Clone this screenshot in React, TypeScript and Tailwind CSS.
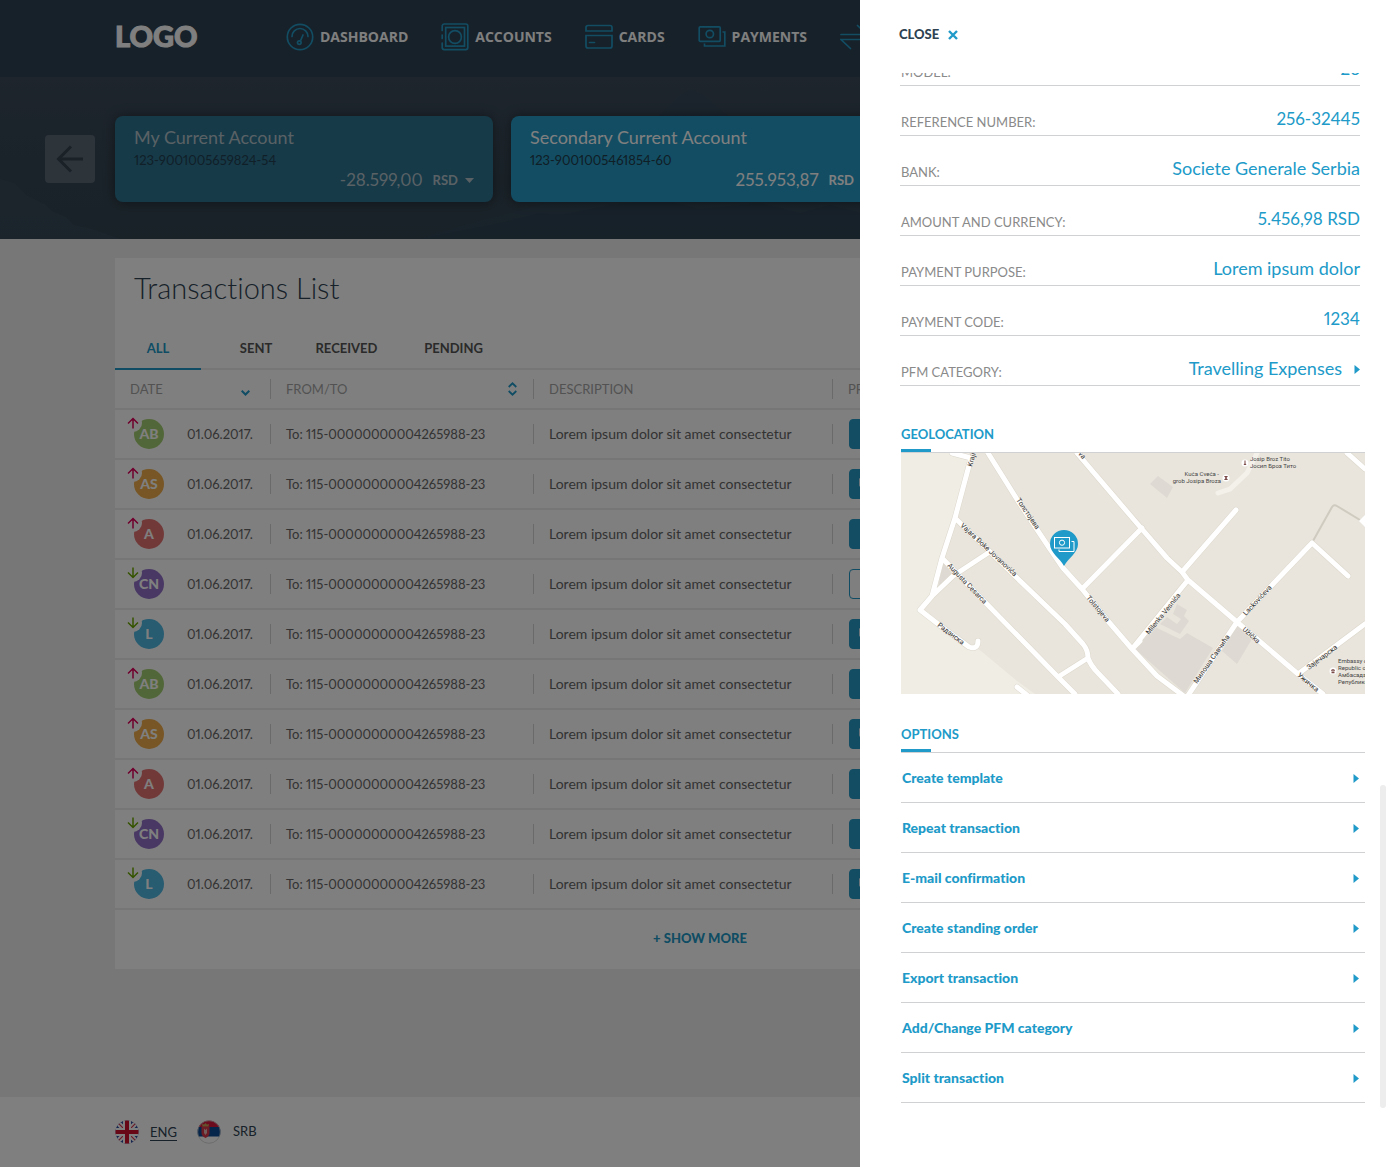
import React from 'react';

type IconProps = { className?: string };

function GaugeIcon() {
  return (
    <svg width="28" height="28" viewBox="0 0 28 28" fill="none" stroke="currentColor" strokeWidth="1.7" strokeLinecap="round" aria-hidden="true">
      <circle cx="14" cy="14" r="12.7" />
      <path d="M6 13.5a8 8 0 0 1 16 0M17 12l-2.6 6" />
      <circle cx="13.3" cy="19.6" r="1.8" />
    </svg>
  );
}

function SafeIcon() {
  return (
    <svg width="28" height="28" viewBox="0 0 28 28" fill="none" stroke="currentColor" strokeWidth="1.7" strokeLinecap="round" aria-hidden="true">
      <path d="M1.2 7.5V3a2 2 0 0 1 2-2h21.6a2 2 0 0 1 2 2v21.6a2 2 0 0 1-2 2H3.2a2 2 0 0 1-2-2V20M1.2 12v3.5" />
      <rect x="4.7" y="4.5" width="18.8" height="18.6" />
      <circle cx="14" cy="14" r="6.4" />
    </svg>
  );
}

function CardIcon() {
  return (
    <svg width="28" height="28" viewBox="0 0 28 28" fill="none" stroke="currentColor" strokeWidth="1.7" strokeLinecap="round" aria-hidden="true">
      <path d="M1 8V4.5a2 2 0 0 1 2-2h22a2 2 0 0 1 2 2V8zM1 12.5h26V23a2 2 0 0 1-2 2H3a2 2 0 0 1-2-2zM4.5 19.5h5" />
    </svg>
  );
}

function NotesIcon({ className }: IconProps) {
  return (
    <svg className={className} viewBox="0 0 28 28" fill="none" stroke="currentColor" strokeWidth="1.7" aria-hidden="true">
      <rect x="1.2" y="3.8" width="21" height="14.5" rx="1" />
      <circle cx="11.8" cy="11" r="3.7" />
      <path d="M24.5 9h2.3v14H6.5v-2.5" />
    </svg>
  );
}

function TransferIcon() {
  return (
    <svg width="28" height="28" viewBox="0 0 28 28" fill="none" stroke="currentColor" strokeWidth="1.7" strokeLinecap="round" aria-hidden="true">
      <path d="M1 11.5h26L17.5 2.5M27 16.5H1l9.5 9" />
    </svg>
  );
}

function Caret() {
  return (
    <svg width="6" height="10" viewBox="0 0 6 10" fill="currentColor" aria-hidden="true">
      <path d="M0.5 1 6 5.500 0.500 10z" />
    </svg>
  );
}

function UkFlag() {
  return (
    <svg width="24" height="24" viewBox="0 0 24 24" aria-hidden="true">
      <clipPath id="uk"><circle cx="12" cy="12" r="11.5" /></clipPath>
      <g clipPath="url(#uk)">
        <rect width="24" height="24" fill="#2b4a9c" />
        <path d="M0 0 24 24M24 0 0 24" stroke="#fff" strokeWidth="5" />
        <path d="M0 0 24 24M24 0 0 24" stroke="#d8344a" strokeWidth="1.2" />
        <path d="M12 0v24M0 12h24" stroke="#fff" strokeWidth="8" />
        <path d="M12 0v24M0 12h24" stroke="#d0102c" strokeWidth="4" />
      </g>
    </svg>
  );
}

function SerbiaFlag() {
  return (
    <svg width="24" height="24" viewBox="0 0 24 24" aria-hidden="true">
      <clipPath id="srb"><circle cx="12" cy="12" r="11.5" /></clipPath>
      <g clipPath="url(#srb)">
        <rect width="24" height="24" fill="#fff" />
        <rect width="24" height="7" fill="#d8163a" />
        <rect y="7" width="24" height="9.5" fill="#0c4a94" />
        <path d="M4.5 6.5h8v6.5q0 3-4 5-4-2-4-5z" fill="#d8394a" />
        <path d="M7 8.5 8.5 10 10 8.5 10 13l-1.5 2-1.5-2z" fill="#e6b9b9" />
        <path d="M5.5 6.5 5 4l2 .5L8.5 3l1.5 1.5L12 4l-.5 2.5z" fill="#c9a25a" />
      </g>
      <circle cx="12" cy="12" r="11.3" fill="none" stroke="#c9c9c9" strokeWidth="0.7" />
    </svg>
  );
}

function Mountains() {
  return (
    <svg className="absolute inset-0 h-full w-full" viewBox="0 0 1400 162" preserveAspectRatio="xMidYMax slice" aria-hidden="true">
      <path d="M0 102 14 106 26 118 34 122 46 128 52 134 66 140 74 148 92 152 120 162H0z" fill="#3f5061" opacity=".45" />
      <path d="M420 162 470 146 540 128 600 96 640 60 662 36 672 26 680 18 690 12 704 18 722 34 760 70 830 108 900 140 960 162z" fill="#33485a" opacity=".45" />
      <path d="M420 162 500 146 540 136 560 138 610 128 660 122 700 132 760 126 800 136 830 128 900 146 960 162z" fill="#283c4b" opacity=".3" />
    </svg>
  );
}

const roads =
  'M51 0 70 5 72 0M70 5 54 65 41 105 31 143 19 157 37 171 68 194Q77 197 77 188M54 65 114 123 164 171 182 191Q187 197 187 205 190 213 197 220L217 241M41 105 157 224 174 241M87 100 52 123 31 143M187 205 157 224M87 0 117 48 149 96 162 115 181 136 207 168 231 196 256 223 284 244M176 0 234 68 266 105 281 119 287 127 336 169 397 221 422 241M181 136 241 75M281 119 335 57M287 127 231 196 239 188M336 169 411 90 447 123M336 169 286 244M397 221 464 171M446 0 464 16M116 234 126 242';

const streetLabels: { text: string; x: number; y: number; angle: number }[] = [
  { text: 'Kraji', x: 71, y: 14, angle: -74 },
  { text: 'Толстојева', x: 115, y: 47, angle: 56 },
  { text: 'Vajara Đoke Jovanovića', x: 59, y: 73, angle: 43 },
  { text: 'Augusta Cesarca', x: 46, y: 113, angle: 46 },
  { text: 'Раданска', x: 36, y: 173, angle: 37 },
  { text: 'Tolstojeva', x: 185, y: 145, angle: 50 },
  { text: 'va', x: 177, y: 1, angle: 50 },
  { text: 'Milenka Vesnića', x: 248, y: 182, angle: -51 },
  { text: 'Милоша Савчића', x: 296, y: 231, angle: -55 },
  { text: 'Lackovićeva', x: 345, y: 163, angle: -47 },
  { text: 'Užička', x: 341, y: 177, angle: 42 },
  { text: 'Ужичка', x: 396, y: 223, angle: 40 },
  { text: 'Зајечарска', x: 408, y: 217, angle: -37 },
];

function StreetMap() {
  return (
    <svg viewBox="0 0 464 241" className="block w-full font-['Roboto',sans-serif]" role="img" aria-label="Transaction location">
      <rect width="464" height="241" fill="#e9e5dc" />
      <path d="M0 0H72L54 65 41 105 31 143 19 157 37 171 80 198 116 228 134 241H0z" fill="#f0ede5" />
      <g fill="#dedad3">
        <path d="M257 23 272 34 266 45 249 31zM254 174 279 186 286 180 312 195 284 240 234 196zM336 172 351 186 336 211 321 198zM42 108 51 121 37 135z" />
        <path d="M276 151 286 157 283 163 288 168 279 181 259 171 266 164 276 171 280 166 272 161z" />
      </g>
      <path d="M356 0 346 20 329 36 317 40" fill="none" stroke="#f4f1eb" strokeWidth="5" strokeLinecap="round" />
      <path d="M412 88 431 54Q433 51 436 53L459 67" fill="none" stroke="#d0cbc0" strokeWidth="2" />
      <path d={roads} fill="none" stroke="#dcd7cc" strokeWidth="6" strokeLinecap="round" strokeLinejoin="round" />
      <path d={roads} fill="none" stroke="#fff" strokeWidth="5" strokeLinecap="round" strokeLinejoin="round" />
      <path d="M458 68 466 60V76z" fill="#fff" />
      <g fill="#333" fontSize="7" stroke="#f5f2ec" strokeWidth="1" paintOrder="stroke">
        {streetLabels.map((l) => (
          <text key={l.text} x={l.x} y={l.y} transform={`rotate(${l.angle} ${l.x} ${l.y})`}>{l.text}</text>
        ))}
      </g>
      <g fill="#444" fontSize="6">
        <text x="318" y="23" textAnchor="end">Kuća Cveća -</text>
        <text x="320" y="30" textAnchor="end">grob Josipa Broza</text>
        <text x="349" y="8">Josip Broz Tito</text>
        <text x="349" y="15">Јосип Броз Тито</text>
        <text x="437" y="210">Embassy of</text>
        <text x="437" y="217">Republic of</text>
        <text x="437" y="224">Амбасада</text>
        <text x="437" y="231">Републике</text>
      </g>
      <g fill="#fff">
        <circle cx="325" cy="25" r="3.5" />
        <circle cx="344" cy="10" r="3.5" />
        <circle cx="432" cy="218" r="3.5" />
      </g>
      <path d="M323 23h4l-1.5 2 1.5 2h-4l1.5-2zM343.5 7.5h1v3l1 1.5h-3l1-1.5zM430 217l2-1 2 1v.8h-4zM430.5 218.5h3v1.7h-3z" fill="#7a4a48" />
      <path d="M163 113C159 105 149 100 149 91a14 14 0 0 1 28 0c0 9-10 14-14 22z" fill="#209ac8" />
      <g fill="none" stroke="#fff" strokeWidth="1">
        <rect x="153.5" y="84.5" width="15" height="10.5" />
        <circle cx="161" cy="89.7" r="2.6" />
        <path d="M170.5 88.5h2.5v10h-15v-2" />
      </g>
    </svg>
  );
}

type Direction = 'out' | 'in';
type Row = { initials: string; color: string; dir: Direction; category: 'plain' | 'icon' | 'empty' };

const rows: Row[] = [
  { initials: 'AB', color: 'bg-[#a5cf72]', dir: 'out', category: 'plain' },
  { initials: 'AS', color: 'bg-[#f0ad4a]', dir: 'out', category: 'icon' },
  { initials: 'A', color: 'bg-[#e57373]', dir: 'out', category: 'plain' },
  { initials: 'CN', color: 'bg-[#9271c8]', dir: 'in', category: 'empty' },
  { initials: 'L', color: 'bg-[#4fb8e3]', dir: 'in', category: 'icon' },
  { initials: 'AB', color: 'bg-[#a5cf72]', dir: 'out', category: 'plain' },
  { initials: 'AS', color: 'bg-[#f0ad4a]', dir: 'out', category: 'icon' },
  { initials: 'A', color: 'bg-[#e57373]', dir: 'out', category: 'plain' },
  { initials: 'CN', color: 'bg-[#9271c8]', dir: 'in', category: 'plain' },
  { initials: 'L', color: 'bg-[#4fb8e3]', dir: 'in', category: 'icon' },
];

function Avatar({ row }: { row: Row }) {
  return (
    <span className={`relative flex h-[30px] w-[30px] items-center justify-center rounded-full text-sm font-black text-white ${row.color}`}>
      <span className="absolute -left-[10px] -top-[5px] flex h-[18px] w-[18px] items-center justify-center rounded-full bg-white">
        <svg width="12" height="12" viewBox="0 0 12 12" fill="none" strokeWidth="1.5" aria-hidden="true" stroke={row.dir === 'out' ? '#e0005a' : '#6aa800'}>
          <path d={row.dir === 'out' ? 'M6 11.5V1.5M1 6.5 6 1.5 11 6.5' : 'M6 .5V10.5M1 5.5 6 10.5 11 5.5'} />
        </svg>
      </span>
      <span className="relative">{row.initials}</span>
    </span>
  );
}

const nav = [
  { label: 'DASHBOARD', icon: <GaugeIcon /> },
  { label: 'ACCOUNTS', icon: <SafeIcon /> },
  { label: 'CARDS', icon: <CardIcon /> },
  { label: 'PAYMENTS', icon: <NotesIcon className="h-7 w-7" /> },
];

const accounts = [
  { name: 'My Current Account', number: '123-9001005659824-54', amount: '-28.599,00', active: false },
  { name: 'Secondary Current Account', number: '123-9001005461854-60', amount: '255.953,87', active: true },
];

function AccountCard({ name, number, amount, active }: (typeof accounts)[number]) {
  return (
    <article className={`flex h-[86px] w-[378px] shrink-0 flex-col rounded-lg px-[19px] pt-[11px] shadow-[0_0_12px_rgba(0,0,0,0.4)] ${active ? 'bg-[#249ac6]' : 'bg-[#2d7491]'}`}>
      <h2 className={`text-lg leading-5 ${active ? 'text-white' : 'text-[#b3c3cb]'}`}>{name}</h2>
      <p className={`text-[13px] leading-[26px] ${active ? 'text-[#213c4c]' : 'text-[#213f50]'}`}>{number}</p>
      <p className={`flex items-center justify-end gap-[10px] leading-[14px] ${active ? 'text-white' : 'text-[#b3c3cb]'}`}>
        <span className="text-[17px] leading-[14px]">{amount}</span>
        <button type="button" className="flex items-center gap-[7px] text-[13px] font-bold leading-[14px]">
          RSD
          <svg width="9" height="5" viewBox="0 0 9 5" fill="currentColor" aria-hidden="true"><path d="M0 0h9L4.5 5z" /></svg>
        </button>
      </p>
    </article>
  );
}

const tabs = [
  { label: 'ALL', className: 'w-[86px] border-[#209ac8] text-[#209ac8]' },
  { label: 'SENT', className: 'w-[110px] border-transparent text-[#555]' },
  { label: 'RECEIVED', className: 'w-[71px] border-transparent text-[#555]' },
  { label: 'PENDING', className: 'w-[143px] border-transparent text-[#555]' },
];

const details = [
  { label: 'REFERENCE NUMBER:', value: '256-32445', size: 'text-[17px]' },
  { label: 'BANK:', value: 'Societe Generale Serbia', size: 'text-lg' },
  { label: 'AMOUNT AND CURRENCY:', value: '5.456,98 RSD', size: 'text-[17px]' },
  { label: 'PAYMENT PURPOSE:', value: 'Lorem ipsum dolor', size: 'text-lg' },
  { label: 'PAYMENT CODE:', value: '1234', size: 'text-[17px]' },
];

const options = [
  'Create template',
  'Repeat transaction',
  'E-mail confirmation',
  'Create standing order',
  'Export transaction',
  'Add/Change PFM category',
  'Split transaction',
];

function CellBody({ children, divider = true }: { children?: React.ReactNode; divider?: boolean }) {
  return (
    <div className={`flex h-5 items-center justify-between border-r pl-[15px] ${divider ? 'border-[#d4d4d4]' : 'border-transparent'}`}>
      {children}
    </div>
  );
}

function Transactions() {
  return (
    <main className="mx-auto mt-[19px] w-full max-w-[1170px] bg-white">
      <h1 className="px-[19px] pt-[11px] text-[29px] font-light leading-[38px] text-[#2e4252]">Transactions List</h1>
      <div className="mt-[17px] flex h-[46px] border-b-2 border-[#ececec] text-[13px] font-bold" role="tablist">
        {tabs.map((t, i) => (
          <button key={t.label} type="button" role="tab" aria-selected={i === 0} className={`-mb-[2px] border-b-2 pt-[6px] ${t.className}`}>
            {t.label}
          </button>
        ))}
      </div>
      <table className="w-full table-fixed text-left text-sm text-[#666]">
        <colgroup>
          <col className="w-[156px]" />
          <col className="w-[263px]" />
          <col className="w-[299px]" />
          <col />
        </colgroup>
        <thead>
          <tr className="h-[39px] border-b-2 border-[#ececec] text-[13px] text-[#a5a5a5]">
            <th className="font-normal">
              <CellBody>
                <span>DATE</span>
                <svg className="mr-5 mt-[7px]" width="9" height="6" viewBox="0 0 9 6" fill="none" stroke="#209ac8" strokeWidth="2" aria-hidden="true"><path d="M.7.7 4.5 4.5 8.3.7" /></svg>
              </CellBody>
            </th>
            <th className="font-normal">
              <CellBody>
                <span>FROM/TO</span>
                <svg className="mr-4" width="9" height="14" viewBox="0 0 9 14" fill="none" stroke="#209ac8" strokeWidth="1.8" aria-hidden="true"><path d="M.7 5 4.5 1.3 8.3 5M.7 9 4.5 12.7 8.3 9" /></svg>
              </CellBody>
            </th>
            <th className="font-normal"><CellBody>DESCRIPTION</CellBody></th>
            <th className="font-normal"><CellBody divider={false}>PFM CATEGORY</CellBody></th>
          </tr>
        </thead>
        <tbody>
          {rows.map((r, i) => (
            <tr key={i} className="h-[50px] border-b-2 border-[#ececec]">
              <td>
                <CellBody>
                  <div className="flex items-center gap-[23px] pl-1">
                    <Avatar row={r} />
                    <span className="text-[13px]">01.06.2017.</span>
                  </div>
                </CellBody>
              </td>
              <td className="text-[13px]"><CellBody>To: 115-00000000004265988-23</CellBody></td>
              <td><CellBody>Lorem ipsum dolor sit amet consectetur</CellBody></td>
              <td>
                <div className="pl-4">
                  <button
                    type="button"
                    aria-label="Transaction category"
                    className={`flex h-[30px] w-40 items-center rounded border pl-[9px] ${r.category === 'empty' ? 'border-[#209ac8] bg-white' : 'border-[#249ac6] bg-[#249ac6] text-white'}`}
                  >
                    {r.category === 'icon' && <NotesIcon className="h-4 w-4" />}
                  </button>
                </div>
              </td>
            </tr>
          ))}
        </tbody>
      </table>
      <div className="flex h-[59px] items-center justify-center pb-px">
        <button type="button" className="text-[13px] font-black text-[#209ac8]">+ SHOW MORE</button>
      </div>
    </main>
  );
}

function SectionTitle({ children }: { children: React.ReactNode }) {
  return (
    <div className="border-b border-[#cfd1d2]">
      <h2 className="text-[13px] font-bold leading-6 text-[#209ac8]">{children}</h2>
      <div className="mt-[3px] h-[3px] w-[30px] bg-[#209ac8]" />
    </div>
  );
}

function Drawer() {
  return (
    <aside className="absolute inset-y-0 right-0 w-[540px] bg-white pl-10 pr-[35px]" aria-label="Transaction details">
      <button type="button" className="-ml-px mt-6 flex h-[21px] items-center gap-[9px] text-[13px] font-black text-[#2e4252]">
        CLOSE
        <svg width="10" height="10" viewBox="0 0 10 10" stroke="#209ac8" strokeWidth="2.4" aria-hidden="true"><path d="M1 1 9 9M9 1 1 9" /></svg>
      </button>
      <dl className="mr-[5px] mt-7 text-[13px] text-[#8a8a8a]">
        <div className="flex h-[13px] items-end justify-between overflow-hidden border-b border-[#cfd1d2] pl-px">
          <dt className="leading-[26px]">MODEL:</dt>
          <dd className="text-[17px] leading-8 text-[#209ac8]">23</dd>
        </div>
        {details.map(({ label, value, size }) => (
          <div key={label} className="flex h-[50px] items-end justify-between border-b border-[#cfd1d2] pl-px">
            <dt className="leading-[26px]">{label}</dt>
            <dd className={`leading-[33px] text-[#209ac8] ${size}`}>{value}</dd>
          </div>
        ))}
        <div className="flex h-[50px] items-end justify-between border-b border-[#cfd1d2] pl-px">
          <dt className="leading-[26px]">PFM CATEGORY:</dt>
          <dd>
            <button type="button" className="flex items-center gap-3 text-lg leading-[33px] text-[#209ac8]">
              Travelling Expenses
              <Caret />
            </button>
          </dd>
        </div>
      </dl>
      <section className="ml-px mt-9">
        <SectionTitle>GEOLOCATION</SectionTitle>
        <StreetMap />
      </section>
      <section className="ml-px mt-7">
        <SectionTitle>OPTIONS</SectionTitle>
        <ul>
          {options.map((o) => (
            <li key={o} className="border-b border-[#cfd1d2]">
              <button type="button" className="flex h-[49px] w-full items-center justify-between pl-px pr-[6px] text-sm font-black text-[#209ac8]">
                {o}
                <Caret />
              </button>
            </li>
          ))}
        </ul>
      </section>
      <div className="absolute right-[14px] top-[785px] h-[323px] w-[6px] rounded-full bg-[#ededed]" />
    </aside>
  );
}

export default function App() {
  return (
    <div className="relative flex min-h-screen flex-col overflow-hidden bg-[#efefef] font-['Lato',sans-serif] proportional-nums [font-variant-ligatures:none]">
      <header className="bg-[#2e4252]">
        <div className="mx-auto flex h-[77px] max-w-[1170px] items-center pb-1">
          <a href="#home" className="w-[171px] pb-px text-[29px] font-black text-white [-webkit-text-stroke:1px_white]">LOGO</a>
          <nav className="flex items-center gap-[33px] font-['Open_Sans',sans-serif] text-sm font-bold text-white">
            {nav.map((n) => (
              <a key={n.label} href="#nav" className="flex items-center gap-[6px]">
                <span className="text-[#249ac6]">{n.icon}</span>
                {n.label}
              </a>
            ))}
            <a href="#transfers" aria-label="Transfers" className="text-[#249ac6]"><TransferIcon /></a>
          </nav>
        </div>
      </header>
      <section className="relative h-[162px] overflow-hidden bg-linear-to-b from-[#3c4a5a] to-[#31444f]">
        <Mountains />
        <div className="relative flex items-start pl-[45px] pt-[39px]">
          <button type="button" aria-label="Previous account" className="mr-5 mt-[19px] flex h-12 w-[50px] items-center justify-center rounded-sm bg-[#5a6875]">
            <svg width="28" height="28" viewBox="0 0 28 28" fill="none" stroke="#34434f" strokeWidth="3" aria-hidden="true"><path d="M27 14H3M15 1.5 2.5 14 15 26.5" /></svg>
          </button>
          <div className="flex gap-[18px]">
            {accounts.map((a) => <AccountCard key={a.name} {...a} />)}
          </div>
        </div>
      </section>
      <Transactions />
      <footer className="mt-auto h-[70px] bg-white">
        <div className="mx-auto flex h-[70px] max-w-[1170px] items-center gap-5 text-[13px] text-[#2e4252]">
          <a href="#eng" className="flex items-center gap-[11px]"><UkFlag /><span className="border-b border-[#2e4252] leading-4">ENG</span></a>
          <a href="#srb" className="flex items-center gap-3"><SerbiaFlag />SRB</a>
        </div>
      </footer>
      <div className="absolute inset-0 bg-black/50" />
      <Drawer />
    </div>
  );
}
